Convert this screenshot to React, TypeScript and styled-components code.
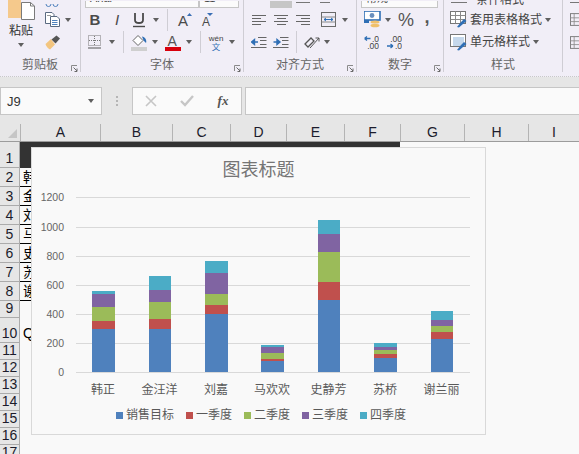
import styled, { createGlobalStyle } from "styled-components";

const GlobalStyle = createGlobalStyle`
  html, body {
    margin: 0;
    width: 579px;
    height: 454px;
    overflow: hidden;
    background: #f9f9f9;
  }
  * { box-sizing: border-box; }
`;

const cjk = `"Liberation Sans", "Noto Sans CJK SC", sans-serif`;

const Page = styled.div`
  position: relative;
  width: 579px;
  height: 454px;
  overflow: hidden;
  font-family: ${cjk};
`;

/* ribbon */
const Ribbon = styled.div`
  display: flex;
  height: 77px;
  background: #f1eef7;
  border-bottom: 1px dotted #c9c9c9;
  overflow: hidden;
`;

const Group = styled.section<{ $w: number }>`
  position: relative;
  flex: none;
  width: ${(p) => p.$w}px;
  height: 76px;
  display: flex;
  flex-direction: column;
  &::after {
    content: "";
    position: absolute;
    right: 0;
    top: 0;
    height: 72px;
    width: 1px;
    background: #cfcdd4;
  }
`;

const GroupBody = styled.div`
  flex: 1;
  display: flex;
`;

const Stack = styled.div`
  flex: 1;
  display: flex;
  flex-direction: column;
`;

const Strip = styled.div<{ $pad?: number }>`
  height: 8px;
  display: flex;
  align-items: flex-end;
  padding-left: ${(p) => p.$pad ?? 0}px;
  overflow: hidden;
`;

const ToolRow = styled.div<{ $pad?: number; $h?: number }>`
  height: ${(p) => p.$h ?? 23}px;
  display: flex;
  align-items: center;
  padding-left: ${(p) => p.$pad ?? 0}px;
`;

const Slot = styled.div<{ $w: number }>`
  flex: none;
  width: ${(p) => p.$w}px;
  display: flex;
  align-items: center;
  justify-content: center;
  color: #444;
`;

const Caret = styled.i`
  display: block;
  width: 0;
  height: 0;
  border-left: 3.5px solid transparent;
  border-right: 3.5px solid transparent;
  border-top: 4px solid #5f5f5f;
`;

const Sep = styled.i`
  display: block;
  width: 1px;
  height: 22px;
  background: #cfcdd4;
`;

const GroupLabel = styled.div`
  height: 22px;
  padding: 2px 1px 0 0;
  font-size: 12px;
  line-height: 19px;
  text-align: center;
  color: #666;
`;

const Launcher = styled.svg`
  position: absolute;
  right: 3px;
  bottom: 4px;
`;

const FontBox = styled.div<{ $w: number }>`
  width: ${(p) => p.$w}px;
  height: 7px;
  flex: none;
  background: #fbfbfb;
  border: 1px solid #c6c6c6;
  border-top: 0;
  font-size: 11px;
  line-height: 0;
  color: #444;
  padding-left: 4px;
  overflow: hidden;
`;

const BoxValue = styled.span`
  display: block;
  margin-top: -3px;
`;

const GrayKey = styled.div`
  width: 22px;
  height: 7px;
  background: #c6c6c6;
  flex: none;
  margin-left: 26px;
  margin-right: 4px;
`;

const ClippedIcon = styled.i<{ $w: number; $gap?: number }>`
  display: block;
  flex: none;
  width: ${(p) => p.$w}px;
  height: 3px;
  margin-right: ${(p) => p.$gap ?? 0}px;
  border-bottom: 1px solid #777;
  align-self: flex-start;
`;

const ClippedLabel = styled.span`
  display: block;
  font-size: 12px;
  line-height: 0;
  color: #444;
  align-self: flex-start;
  margin-left: 5px;
  white-space: nowrap;
`;

const PasteColumn = styled.div`
  width: 41px;
  flex: none;
  display: flex;
  flex-direction: column;
  align-items: center;
  padding-left: 1px;
`;

const PasteText = styled.div`
  margin-top: 2px;
  margin-bottom: 3px;
  font-size: 12px;
  line-height: 18px;
  color: #333;
`;

const LetterBtn = styled.span<{ $italic?: boolean; $bold?: boolean; $size?: number }>`
  font-size: ${(p) => p.$size ?? 15}px;
  font-weight: ${(p) => (p.$bold ? 700 : 400)};
  font-style: ${(p) => (p.$italic ? "italic" : "normal")};
  color: #4a4a4a;
  line-height: 1;
`;

const StyleText = styled.span`
  font-size: 12px;
  color: #444;
  white-space: nowrap;
  line-height: 16px;
`;

/* formula bar */
const FormulaBar = styled.div`
  height: 47px;
  padding-top: 10px;
  display: flex;
  align-items: flex-start;
  background: #e6e6e6;
`;

const FieldBox = styled.div<{ $w: number }>`
  flex: none;
  width: ${(p) => p.$w}px;
  height: 28px;
  background: #fafafa;
  border: 1px solid #c6c6c6;
  display: flex;
  align-items: center;
`;

const FormulaInput = styled(FieldBox)`
  margin-left: 3px;
`;

const NameText = styled.span`
  flex: 1;
  padding-left: 6px;
  font-size: 13px;
  color: #333;
`;

const Dots = styled.div`
  flex: none;
  width: 30px;
  height: 28px;
  display: flex;
  flex-direction: column;
  align-items: center;
  justify-content: center;
  gap: 2px;
  & > i {
    width: 2px;
    height: 2px;
    background: #b5b5b5;
  }
`;

const FxSlot = styled.div`
  width: 36px;
  flex: none;
  display: flex;
  align-items: center;
  justify-content: center;
`;

const FxText = styled.span`
  font-family: "Liberation Serif", serif;
  font-style: italic;
  font-weight: 700;
  font-size: 13px;
  color: #555;
`;

/* sheet */
const ColHeader = styled.div`
  display: flex;
  height: 18px;
  background: #e6e6e6;
  border-bottom: 1px solid #9c9c9c;
`;

const Corner = styled.div`
  position: relative;
  flex: none;
  width: 20px;
  &::after {
    content: "";
    position: absolute;
    right: 3px;
    bottom: 3px;
    width: 0;
    height: 0;
    border-left: 9px solid transparent;
    border-bottom: 9px solid #c6c6c6;
  }
`;

const ColCell = styled.div<{ $w: number }>`
  flex: none;
  width: ${(p) => p.$w}px;
  border-left: 1px solid #b4b4b4;
  text-align: center;
  font-size: 14px;
  line-height: 17px;
  color: #1c1c2c;
`;

const SheetRow = styled.div<{ $h: number }>`
  display: flex;
  height: ${(p) => p.$h}px;
`;

const RowHead = styled.div`
  flex: none;
  width: 20px;
  background: #e6e6e6;
  border-bottom: 1px solid #ababab;
  border-right: 1px solid #ababab;
  font-size: 14px;
  text-align: center;
  display: flex;
  align-items: flex-end;
  justify-content: center;
  color: #1c1c2c;
  line-height: 17px;
`;

const DarkFill = styled.div`
  flex: none;
  width: 380px;
  background: #333;
`;

const NameCell = styled.div`
  flex: none;
  width: 80px;
  border-bottom: 1px solid #000;
  padding-left: 3px;
  font-size: 14px;
  line-height: 18px;
  color: #000;
  white-space: nowrap;
`;

const PlainCell = styled.div`
  flex: none;
  width: 80px;
  padding-left: 3px;
  font-size: 14px;
  line-height: 30px;
  color: #000;
`;

/* chart */
const ChartPanel = styled.div`
  position: absolute;
  left: 31px;
  top: 147px;
  width: 455px;
  height: 288px;
  background: #f9f9f9;
  border: 1px solid #d9d9d9;
`;

const ChartTitle = styled.div`
  height: 42px;
  padding-top: 10px;
  font-size: 18px;
  line-height: 24px;
  text-align: center;
  color: #757575;
`;

const Plot = styled.svg`
  display: block;
  font-family: ${cjk};
`;

const Legend = styled.div`
  display: flex;
  padding-left: 84px;
  margin-top: 5px;
  gap: 12px;
`;

const LegendItem = styled.div`
  display: flex;
  align-items: center;
  gap: 3px;
  font-size: 12px;
  line-height: 18px;
  color: #595959;
`;

const Swatch = styled.i<{ $c: string }>`
  width: 7px;
  height: 7px;
  background: ${(p) => p.$c};
`;

const seriesColors = ["#4f81bd", "#c0504d", "#9bbb59", "#8064a2", "#4bacc6"];
const seriesNames = ["销售目标", "一季度", "二季度", "三季度", "四季度"];

// top edge of each segment in page pixels, teal segment first
const bars = [
  { name: "韩正", x: 92, w: 23, ys: [291, 294, 307, 321, 329] },
  { name: "金汪洋", x: 149, w: 22, ys: [276, 290, 302, 319, 329] },
  { name: "刘嘉", x: 205, w: 23, ys: [261, 273, 294, 305, 314] },
  { name: "马欢欢", x: 261, w: 23, ys: [345, 347, 353, 359, 361] },
  { name: "史静芳", x: 318, w: 22, ys: [220, 234, 252, 282, 300] },
  { name: "苏桥", x: 374, w: 23, ys: [343, 347, 350, 354, 358] },
  { name: "谢兰丽", x: 431, w: 22, ys: [311, 320, 326, 332, 339] },
];

const axis = [1200, 1000, 800, 600, 400, 200, 0];
const axisY = [197, 227, 256, 285, 314, 343, 372];
const plotLeft = 32;
const plotTop = 190;

function StackedChart() {
  return (
    <ChartPanel>
      <ChartTitle>图表标题</ChartTitle>
      <Plot width={453} height={211} viewBox={`${plotLeft} ${plotTop} 453 211`}>
        {axis.map((v, i) => (
          <g key={v}>
            <line x1={76} x2={470} y1={axisY[i] + 0.5} y2={axisY[i] + 0.5} stroke="#d9d9d9" />
            <text x={64} y={axisY[i] + 4} textAnchor="end" fontSize={10.5} fill="#666">
              {v}
            </text>
          </g>
        ))}
        {bars.map((b) => (
          <g key={b.name}>
            {b.ys.map((top, i) => {
              const bottom = i === 4 ? 372 : b.ys[i + 1];
              return (
                <rect
                  key={i}
                  x={b.x}
                  y={top}
                  width={b.w}
                  height={bottom - top}
                  fill={seriesColors[4 - i]}
                />
              );
            })}
            <text x={b.x + b.w / 2 - 0.5} y={394} textAnchor="middle" fontSize={12} fill="#595959">
              {b.name}
            </text>
          </g>
        ))}
      </Plot>
      <Legend>
        {seriesNames.map((n, i) => (
          <LegendItem key={n}>
            <Swatch $c={seriesColors[i]} />
            {n}
          </LegendItem>
        ))}
      </Legend>
    </ChartPanel>
  );
}

/* ribbon icons */
const LauncherIcon = () => (
  <Launcher width="7" height="7" viewBox="0 0 7 7" fill="none">
    <path d="M0.5 6V0.5H6" stroke="#8a8a8a" />
    <path d="M2.5 2.5L6 6M6 3.5V6.5H3.5" stroke="#6a6a6a" />
  </Launcher>
);

const PasteIcon = () => (
  <svg width="27" height="20" viewBox="0 0 27 20">
    <rect x="0" y="0" width="13" height="18" fill="#f5c98c" />
    <path d="M13.5 2.5H22.5L26.5 6V19.5H13.5Z" fill="#fff" stroke="#7a7a7a" />
    <path d="M22.5 2.5V6H26.5" fill="none" stroke="#7a7a7a" />
  </svg>
);

const ScissorsTop = () => (
  <svg width="14" height="4" viewBox="0 0 14 4" fill="none">
    <circle cx="3.5" cy="0" r="2.5" stroke="#4f81bd" />
    <circle cx="10.5" cy="0" r="2.5" stroke="#4f81bd" />
  </svg>
);

const CopyIcon = () => (
  <svg width="15" height="15" viewBox="0 0 15 15" fill="none" stroke="#5a6a80">
    <path d="M0.5 0.5H7L9 2.5V11.5H0.5Z" fill="#fff" />
    <path d="M5.5 4.5H12L14.5 7V14.5H5.5Z" fill="#fff" />
    <path d="M7 8.5H12.5M7 10.5H12.5M7 12.5H12.5" stroke="#4f81bd" />
    <path d="M2 3.5H6" stroke="#9a9a9a" />
  </svg>
);

const BrushIcon = () => (
  <svg width="16" height="15" viewBox="0 0 16 15">
    <path d="M0.5 9L6 4L10 9.5L5 14.5C3.5 14 1 11.5 0.5 9Z" fill="#f3c57f" />
    <path d="M6.5 4.5L11.5 0.5L15 3.5L10.5 8.5Z" fill="#555" />
  </svg>
);

const UnderU = () => (
  <svg width="14" height="16" viewBox="0 0 14 16" fill="none">
    <path d="M3 1V8C3 12 11 12 11 8V1" stroke="#4a4a4a" strokeWidth="1.8" />
    <path d="M1 14.5H13" stroke="#4a4a4a" strokeWidth="1.4" />
  </svg>
);

const GrowA = ({ size, textX, arrow }: { size: number; textX: number; arrow: string }) => (
  <svg width="20" height="16" viewBox="0 0 20 16">
    <text x={textX} y="14" fontSize={size} fontFamily="Liberation Sans" fill="#4a4a4a">
      A
    </text>
    <path d={arrow} fill="#3a6fb5" />
  </svg>
);

const BorderIcon = () => (
  <svg width="14" height="14" viewBox="0 0 14 14" fill="none">
    <rect x="0.5" y="0.5" width="12" height="10" stroke="#777" strokeDasharray="1 1" />
    <path d="M6.5 1V11M1 5.5H13" stroke="#777" strokeDasharray="1 1" />
    <path d="M0 13H13" stroke="#555" />
  </svg>
);

const FillIcon = () => (
  <svg width="17" height="17" viewBox="0 0 17 17">
    <path d="M2 6.5L7 1.5L12 6.5L7 11.5Z" fill="#fff" stroke="#666" />
    <path d="M11 2.5C14 3 16 6 15 9L12.5 6.5Z" fill="#2f6fb5" />
    <rect x="0" y="13" width="16" height="4" fill="#cfcfcf" />
  </svg>
);

const FontColorIcon = () => (
  <svg width="16" height="17" viewBox="0 0 16 17">
    <text x="2.5" y="12" fontSize={14} fontFamily="Liberation Sans" fill="#555">
      A
    </text>
    <rect x="0" y="13" width="16" height="4" fill="#d8000c" />
  </svg>
);

const PhoneticIcon = () => (
  <svg width="17" height="17" viewBox="0 0 17 17">
    <text x="8.5" y="7" textAnchor="middle" fontSize={8.5} fontFamily="Liberation Sans" fill="#444">
      wén
    </text>
    <text x="8.5" y="16" textAnchor="middle" fontSize={9} fontFamily="Noto Sans CJK SC" fill="#2f6fb5">
      文
    </text>
  </svg>
);

const Lines = ({ kind }: { kind: "left" | "center" | "right" }) => {
  const short = { left: "M0 4.5H9M0 10.5H9", center: "M3 4.5H12M3 10.5H12", right: "M5 4.5H14M5 10.5H14" }[kind];
  return (
    <svg width="14" height="12" viewBox="0 0 14 12" fill="none" stroke="#666">
      <path d="M0 1.5H14M0 7.5H14" />
      <path d={short} />
    </svg>
  );
};

const WrapIcon = () => (
  <svg width="15" height="15" viewBox="0 0 15 15" fill="none">
    <rect x="0.5" y="0.5" width="14" height="14" stroke="#6a6a6a" />
    <path d="M0.5 5H14.5M0.5 10H14.5" stroke="#8a8a8a" />
    <path d="M3 7.5H12M3 7.5L5 6M3 7.5L5 9M12 7.5L10 6M12 7.5L10 9" stroke="#2f6fb5" />
  </svg>
);

const IndentIcon = ({ out }: { out: boolean }) => (
  <svg width="16" height="13" viewBox="0 0 16 13" fill="none">
    <path d="M7 1.5H15.5M9 4.5H15.5M9 8.5H15.5M0 11.5H15.5" stroke="#666" />
    {out ? (
      <path d="M0.5 6H7M0.5 6L3.5 3.5V8.5Z" stroke="#2f6fb5" strokeWidth="1.4" fill="#2f6fb5" />
    ) : (
      <path d="M0.5 6H7M7 6L4 3.5V8.5Z" stroke="#2f6fb5" strokeWidth="1.4" fill="#2f6fb5" />
    )}
  </svg>
);

const OrientIcon = () => (
  <svg width="17" height="15" viewBox="0 0 17 15" fill="none">
    <path d="M1 9L7 3L10 6L4 12Z" stroke="#555" strokeWidth="1.3" />
    <path d="M6 13L15 3M15 3H11.5M15 3V6.5" stroke="#555" />
  </svg>
);

const MoneyIcon = () => (
  <svg width="17" height="17" viewBox="0 0 17 17">
    <rect x="0" y="0" width="16" height="9" fill="#fff" stroke="#2f6fb5" strokeWidth="1.6" />
    <circle cx="8" cy="4.5" r="2.4" fill="#6a8fbd" />
    <ellipse cx="11" cy="11" rx="4.5" ry="1.6" fill="#f0c069" />
    <ellipse cx="11" cy="14.5" rx="4.5" ry="1.8" fill="#f0c069" />
    <rect x="0" y="9" width="5" height="3" fill="#2f6fb5" />
  </svg>
);

const PercentText = styled.span`
  font-size: 18px;
  color: #555;
  line-height: 1;
`;

const CommaText = styled.span`
  font-size: 18px;
  font-weight: 700;
  color: #555;
  line-height: 1;
  margin-top: -6px;
`;

const DecimalIcon = ({ more }: { more: boolean }) => (
  <svg width="15" height="14" viewBox="0 0 15 14" fontFamily="Liberation Sans" fontSize={8.5} fill="#444">
    <text x="15" y="6.5" textAnchor="end">{more ? ".00" : ".0"}</text>
    <text x="15" y="14" textAnchor="end">{more ? ".0" : ".00"}</text>
    {more ? (
      <path d="M0 11H6M6 11L3.5 9M6 11L3.5 13" stroke="#2f6fb5" strokeWidth="1.3" fill="none" />
    ) : (
      <path d="M0.5 3.5H6.5M0.5 3.5L3 1.5M0.5 3.5L3 5.5" stroke="#2f6fb5" strokeWidth="1.3" fill="none" />
    )}
  </svg>
);

const TableStyleIcon = ({ plain }: { plain: boolean }) => (
  <svg width="18" height="17" viewBox="0 0 18 17" fill="none">
    <rect x="0.5" y="0.5" width="15" height="12" fill="#fff" stroke="#777" />
    {plain ? (
      <rect x="3" y="3" width="11" height="9" fill="#c5d8ec" />
    ) : (
      <path d="M0.5 4.5H15.5M0.5 8.5H15.5M5.5 0.5V12.5M10.5 0.5V12.5" stroke="#8a8a8a" />
    )}
    <path d="M7 16L11 11L14 8L16.5 10L13 13L9 16.5Z" fill="#2f6fb5" />
  </svg>
);

const CellsIcon = () => (
  <svg width="12" height="15" viewBox="0 0 12 15" fill="none">
    <rect x="0.5" y="0.5" width="14" height="14" stroke="#6a6a6a" />
    <path d="M0.5 5.5H14M0.5 10H14M5 0.5V14" stroke="#8a8a8a" />
  </svg>
);

const colWidths: [string, number][] = [
  ["A", 80], ["B", 72], ["C", 58], ["D", 56], ["E", 58],
  ["F", 56], ["G", 64], ["H", 64], ["I", 51],
];

const nameRows: [number, string][] = [
  [2, "韩正"], [3, "金汪洋"], [4, "刘嘉"], [5, "马欢欢"],
  [6, "史静芳"], [7, "苏桥"], [8, "谢兰丽"],
];

export default function App() {
  return (
    <Page>
      <GlobalStyle />
      <Ribbon>
        <Group $w={81}>
          <GroupBody>
            <PasteColumn>
              <PasteIcon />
              <PasteText>粘贴</PasteText>
              <Caret />
            </PasteColumn>
            <Stack>
              <Strip $pad={4}><ScissorsTop /></Strip>
              <ToolRow $pad={4}>
                <Slot $w={15}><CopyIcon /></Slot>
                <Slot $w={16}><Caret /></Slot>
              </ToolRow>
              <ToolRow $pad={4} $h={22}>
                <Slot $w={16}><BrushIcon /></Slot>
              </ToolRow>
            </Stack>
          </GroupBody>
          <GroupLabel>剪贴板</GroupLabel>
          <LauncherIcon />
        </Group>

        <Group $w={163}>
          <Stack>
            <Strip $pad={4}>
              <FontBox $w={114}><BoxValue>Arial</BoxValue></FontBox>
              <FontBox $w={40}><BoxValue>11</BoxValue></FontBox>
            </Strip>
            <ToolRow $pad={3}>
              <Slot $w={22}><LetterBtn $bold>B</LetterBtn></Slot>
              <Slot $w={22}><LetterBtn $italic>I</LetterBtn></Slot>
              <Slot $w={22}><UnderU /></Slot>
              <Slot $w={12}><Caret /></Slot>
              <Slot $w={10}><Sep /></Slot>
              <Slot $w={22}><GrowA size={15} textX={5} arrow="M14 4H19L16.5 1Z" /></Slot>
              <Slot $w={22}><GrowA size={12} textX={7} arrow="M12 1H18L15 4Z" /></Slot>
            </ToolRow>
            <ToolRow $pad={3} $h={22}>
              <Slot $w={22}><BorderIcon /></Slot>
              <Slot $w={12}><Caret /></Slot>
              <Slot $w={10}><Sep /></Slot>
              <Slot $w={22}><FillIcon /></Slot>
              <Slot $w={10}><Caret /></Slot>
              <Slot $w={26}><FontColorIcon /></Slot>
              <Slot $w={6}><Caret /></Slot>
              <Slot $w={16}><Sep /></Slot>
              <Slot $w={16}><PhoneticIcon /></Slot>
              <Slot $w={16}><Caret /></Slot>
            </ToolRow>
          </Stack>
          <GroupLabel>字体</GroupLabel>
          <LauncherIcon />
        </Group>

        <Group $w={113}>
          <Stack>
            <Strip>
              <GrayKey />
              <ClippedIcon $w={14} $gap={10} />
              <ClippedIcon $w={10} />
            </Strip>
            <ToolRow $pad={4}>
              <Slot $w={22}><Lines kind="left" /></Slot>
              <Slot $w={22}><Lines kind="center" /></Slot>
              <Slot $w={22}><Lines kind="right" /></Slot>
              <Slot $w={28}><WrapIcon /></Slot>
              <Slot $w={6}><Caret /></Slot>
            </ToolRow>
            <ToolRow $pad={4} $h={22}>
              <Slot $w={22}><IndentIcon out /></Slot>
              <Slot $w={22}><IndentIcon out={false} /></Slot>
              <Slot $w={8}><Sep /></Slot>
              <Slot $w={24}><OrientIcon /></Slot>
              <Slot $w={6}><Caret /></Slot>
            </ToolRow>
          </Stack>
          <GroupLabel>对齐方式</GroupLabel>
          <LauncherIcon />
        </Group>

        <Group $w={87}>
          <Stack>
            <Strip $pad={4}><FontBox $w={77}><BoxValue>常规</BoxValue></FontBox></Strip>
            <ToolRow $pad={4}>
              <Slot $w={23}><MoneyIcon /></Slot>
              <Slot $w={8}><Caret /></Slot>
              <Slot $w={28}><PercentText>%</PercentText></Slot>
              <Slot $w={14}><CommaText>,</CommaText></Slot>
            </ToolRow>
            <ToolRow $pad={4} $h={22}>
              <Slot $w={20}><DecimalIcon more={false} /></Slot>
              <Slot $w={3} />
              <Slot $w={20}><DecimalIcon more /></Slot>
            </ToolRow>
          </Stack>
          <GroupLabel>数字</GroupLabel>
          <LauncherIcon />
        </Group>

        <Group $w={119}>
          <Stack>
            <Strip $pad={7}>
              <ClippedIcon $w={16} $gap={4} />
              <ClippedLabel>条件格式</ClippedLabel>
            </Strip>
            <ToolRow $pad={4}>
              <Slot $w={22}><TableStyleIcon plain={false} /></Slot>
              <StyleText>套用表格格式</StyleText>
              <Slot $w={12}><Caret /></Slot>
            </ToolRow>
            <ToolRow $pad={4} $h={22}>
              <Slot $w={22}><TableStyleIcon plain /></Slot>
              <StyleText>单元格样式</StyleText>
              <Slot $w={12}><Caret /></Slot>
            </ToolRow>
          </Stack>
          <GroupLabel>样式</GroupLabel>
        </Group>

        <Group $w={17}>
          <Stack>
            <Strip $pad={7}><ClippedIcon $w={10} /></Strip>
            <ToolRow $pad={7}><CellsIcon /></ToolRow>
            <ToolRow $pad={7} $h={22}><CellsIcon /></ToolRow>
          </Stack>
        </Group>
      </Ribbon>

      <FormulaBar>
        <FieldBox $w={102}>
          <NameText>J9</NameText>
          <Slot $w={20}><Caret /></Slot>
        </FieldBox>
        <Dots><i /><i /><i /></Dots>
        <FieldBox $w={110}>
          <FxSlot>
            <svg width="12" height="12" viewBox="0 0 12 12" stroke="#c6c6c6" strokeWidth="1.6">
              <path d="M1 1L11 11M11 1L1 11" />
            </svg>
          </FxSlot>
          <FxSlot>
            <svg width="14" height="12" viewBox="0 0 14 12" fill="none" stroke="#c6c6c6" strokeWidth="2.4">
              <path d="M1 6L5 10L13 1" />
            </svg>
          </FxSlot>
          <FxSlot><FxText>fx</FxText></FxSlot>
        </FieldBox>
        <FormulaInput $w={336} />
      </FormulaBar>

      <ColHeader>
        <Corner />
        {colWidths.map(([c, w]) => (
          <ColCell key={c} $w={w}>{c}</ColCell>
        ))}
      </ColHeader>

      <SheetRow $h={26}>
        <RowHead>1</RowHead>
        <DarkFill />
      </SheetRow>
      {nameRows.map(([n, name]) => (
        <SheetRow key={n} $h={19}>
          <RowHead>{n}</RowHead>
          <NameCell>{name}</NameCell>
        </SheetRow>
      ))}
      <SheetRow $h={17}><RowHead>9</RowHead></SheetRow>
      <SheetRow $h={25}>
        <RowHead>10</RowHead>
        <PlainCell>Q</PlainCell>
      </SheetRow>
      {[11, 12, 13, 14, 15, 16, 17].map((n) => (
        <SheetRow key={n} $h={17}><RowHead>{n}</RowHead></SheetRow>
      ))}

      <StackedChart />
    </Page>
  );
}
